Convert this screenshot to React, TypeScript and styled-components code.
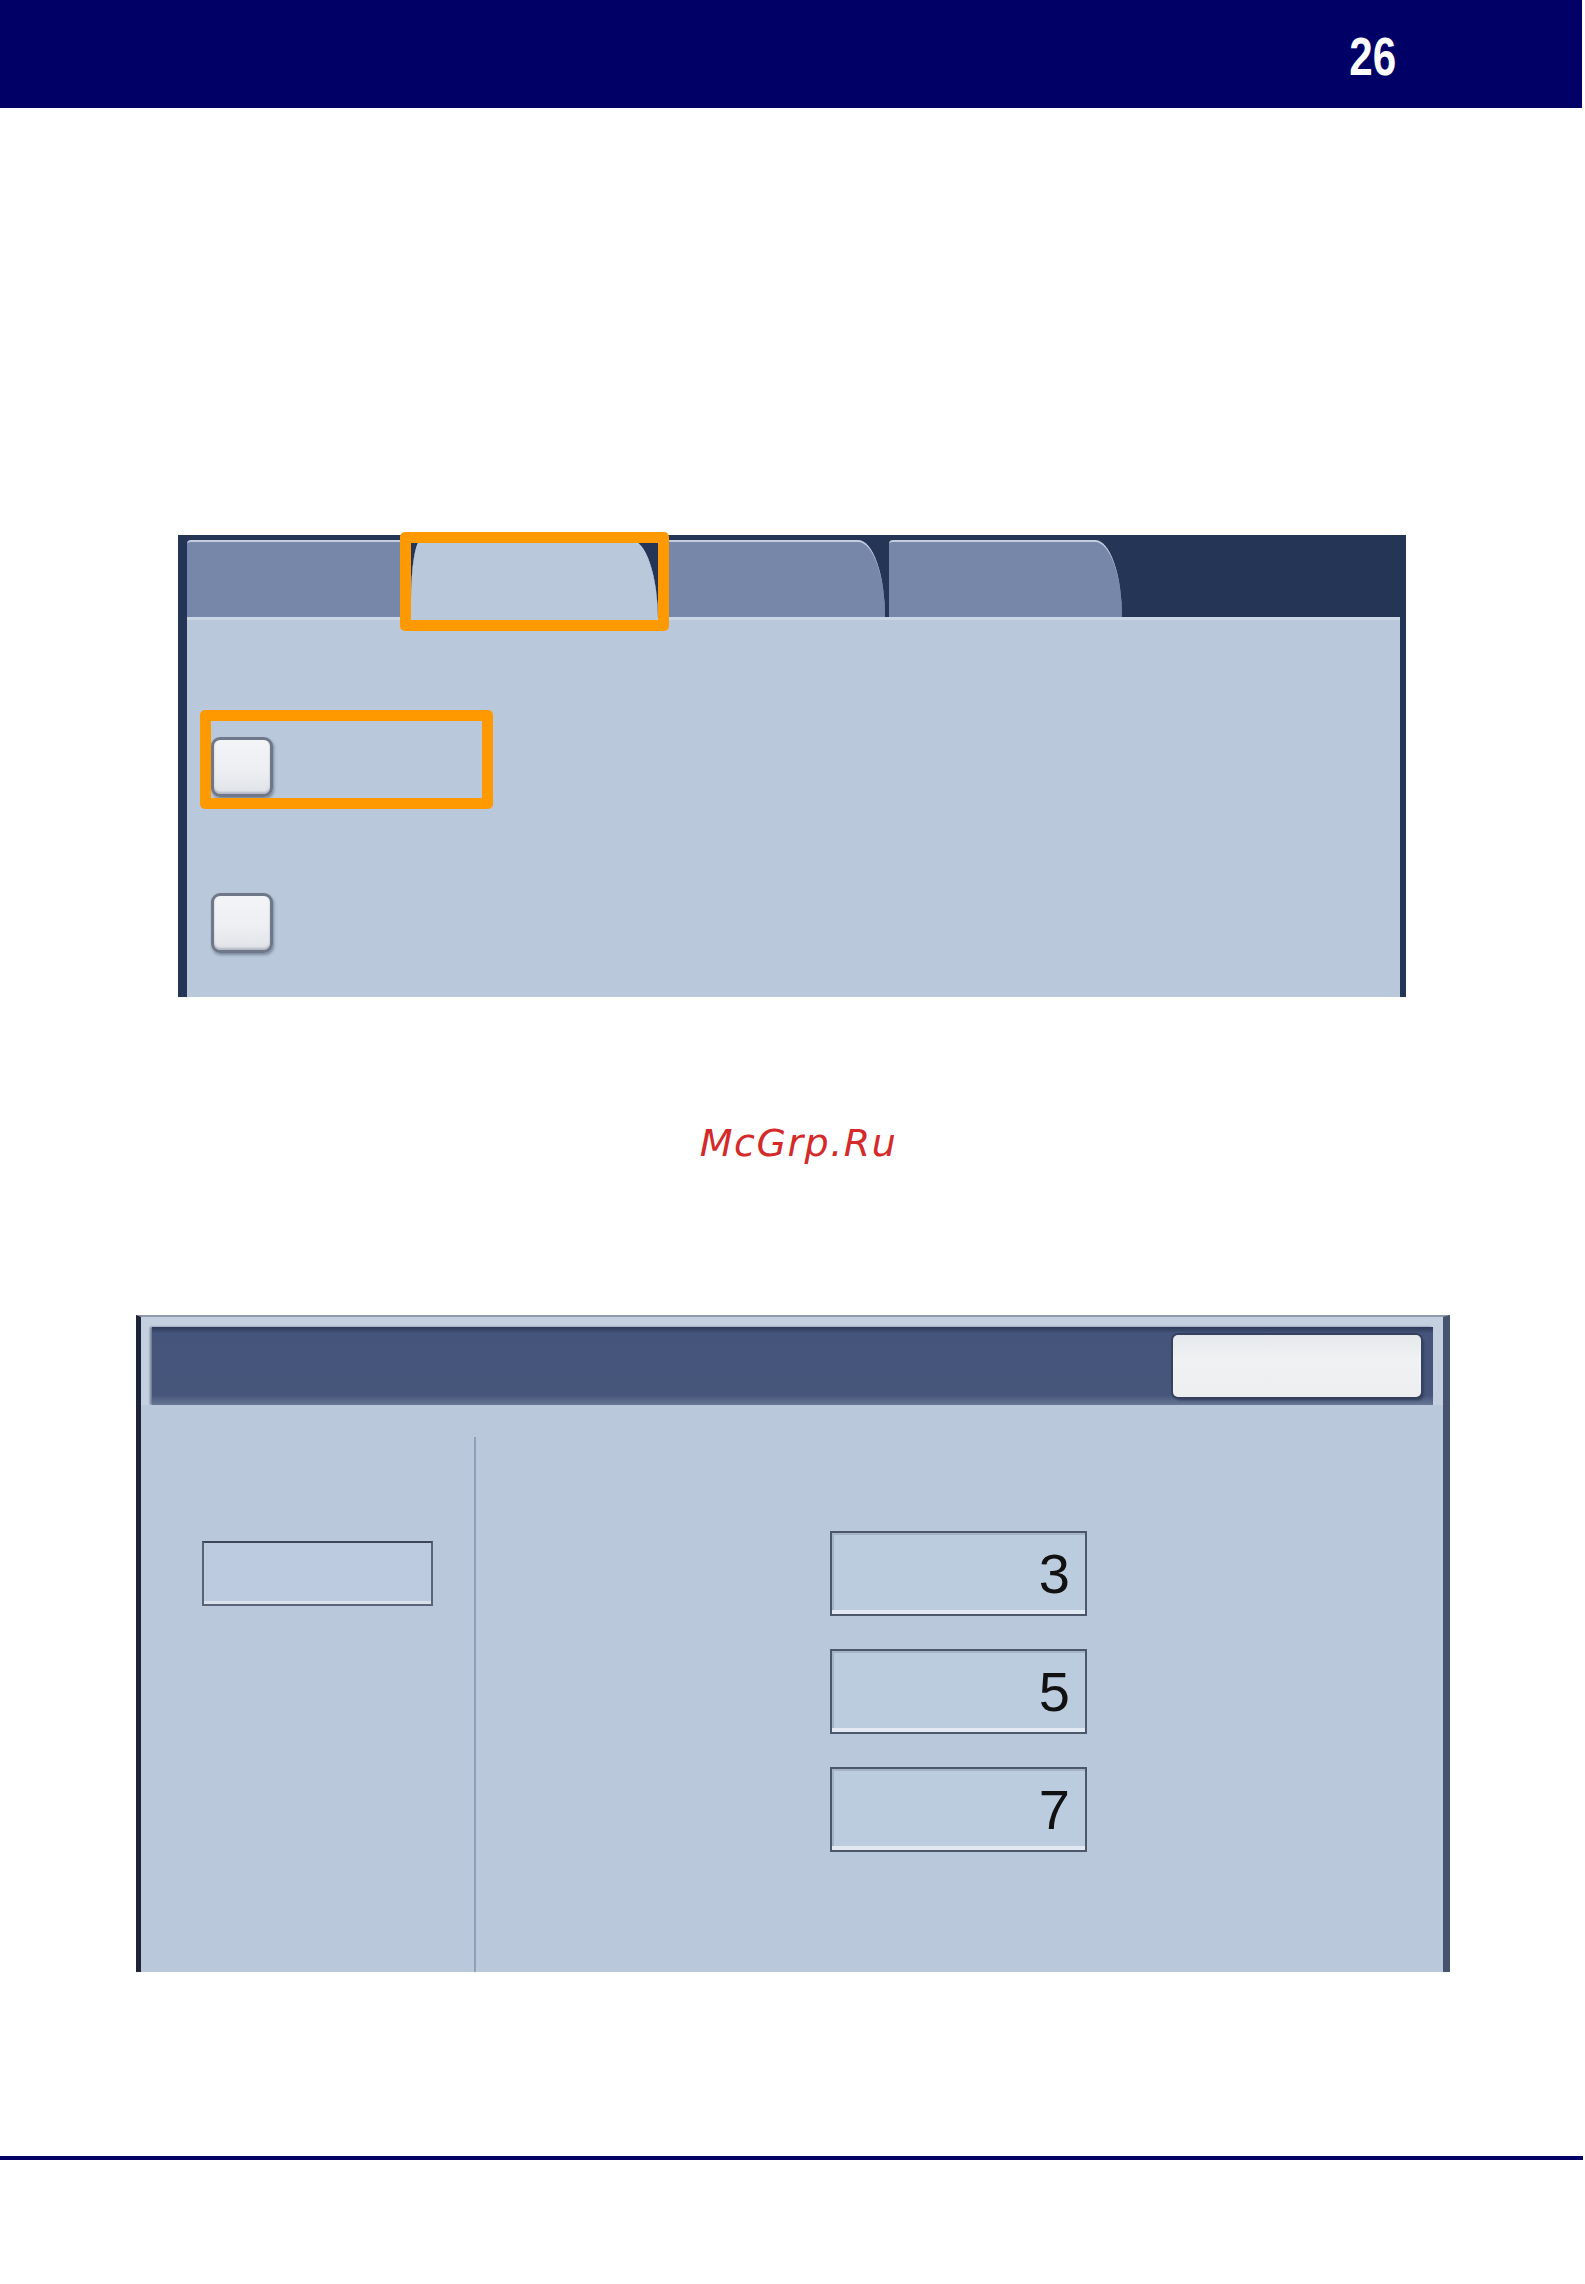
import React from "react";
import styled, { createGlobalStyle } from "styled-components";

const GlobalStyle = createGlobalStyle`
  html, body {
    margin: 0;
    padding: 0;
    background: #ffffff;
  }
  body {
    font-family: "Liberation Sans", Arial, sans-serif;
  }
`;

const Page = styled.div`
  width: 1585px;
  min-height: 2284px;
  background: #ffffff;
  display: flex;
  flex-direction: column;
`;

const TopBar = styled.header`
  width: 1582px;
  height: 108px;
  box-sizing: border-box;
  background: #000066;
  display: flex;
  justify-content: flex-end;
  align-items: flex-start;
  padding: 29px 186px 0 0;
`;

const PageNumber = styled.span`
  display: inline-block;
  font-family: "Liberation Sans", Arial, sans-serif;
  font-weight: 700;
  font-size: 54px;
  line-height: 1;
  color: #ffffff;
  transform: scaleX(0.78);
  transform-origin: right center;
`;

/* ---------- first screen: tabs with options ---------- */

const TabScreen = styled.section`
  position: relative;
  margin: 427px 0 0 178px;
  width: 1228px;
  height: 462px;
  box-sizing: border-box;
  background: #253555;
  padding: 5px 6px 0 9px;
  display: flex;
  flex-direction: column;
`;

const TabBar = styled.div`
  height: 77px;
  display: flex;
  align-items: flex-start;
`;

const Tab = styled.div<{ $w: number; $active?: boolean; $gap: number; $curve: number }>`
  flex: none;
  width: ${(p) => p.$w}px;
  margin-right: ${(p) => p.$gap}px;
  box-sizing: border-box;
  height: ${(p) => (p.$active ? 80 : 77)}px;
  position: relative;
  z-index: ${(p) => (p.$active ? 1 : 0)};
  background: ${(p) => (p.$active ? "#b9c9db" : "#7687a9")};
  border-top: 2px solid ${(p) => (p.$active ? "#c6d3e3" : "#c2cde0")};
  border-top-left-radius: ${(p) => (p.$active ? "10px 60px" : "4px")};
  border-top-right-radius: ${(p) => p.$curve}px 100%;
`;

const TabContent = styled.div`
  flex: 1;
  background: #b9c9db;
  border-top: 3px solid #cbd6e5;
  padding: 117px 0 0 24px;
  display: flex;
  flex-direction: column;
  gap: 96px;
`;

const Checkbox = styled.div`
  width: 62px;
  height: 60px;
  box-sizing: border-box;
  border-radius: 9px;
  border: 3px solid #6f7889;
  background: linear-gradient(180deg, #f3f4f6 0%, #eceef2 60%, #dfe2e8 100%);
  box-shadow: 1px 2px 3px rgba(30, 40, 60, 0.4), inset 0 -2px 2px rgba(110, 120, 140, 0.4);
`;

const Highlight = styled.div<{ $x: number; $y: number; $w: number; $h: number }>`
  position: absolute;
  left: ${(p) => p.$x}px;
  top: ${(p) => p.$y}px;
  width: ${(p) => p.$w}px;
  height: ${(p) => p.$h}px;
  box-sizing: border-box;
  border: 11px solid #ff9900;
  border-radius: 5px;
  z-index: 2;
`;

/* ---------- watermark ---------- */

const Watermark = styled.div`
  margin-top: 124px;
  height: 44px;
  line-height: 44px;
  text-align: center;
  padding-left: 12px;
  font-family: "DejaVu Sans", Verdana, sans-serif;
  font-style: italic;
  font-size: 38px;
  letter-spacing: 1.5px;
  color: #d42a2a;
`;

/* ---------- second screen: values ---------- */

const ValueScreen = styled.section`
  margin: 150px 0 0 136px;
  width: 1314px;
  height: 657px;
  box-sizing: border-box;
  background: #c4d0df;
  border-left: 5px solid #1d2435;
  border-right: 7px solid #46536d;
  border-top: 2px solid #8e99ab;
  padding: 10px 10px 0 11px;
  display: flex;
  flex-direction: column;
`;

const TitleBar = styled.div`
  height: 78px;
  box-sizing: border-box;
  background: linear-gradient(180deg, #2c3857 0%, #44547a 8%, #46567b 88%, #6a7896 100%);
  box-shadow: -2px 0 2px rgba(30, 40, 60, 0.5);
  display: flex;
  justify-content: flex-end;
  align-items: center;
  padding-right: 12px;
`;

const TitleButton = styled.div`
  width: 248px;
  height: 62px;
  box-sizing: border-box;
  border-radius: 5px;
  background: linear-gradient(180deg, #e6e9ec 0%, #eff1f2 40%, #eceef0 100%);
  box-shadow: 0 0 0 2px #34425f, 2px 3px 3px rgba(10, 20, 40, 0.5);
`;

const ValueBody = styled.div`
  flex: 1;
  display: flex;
  background: #b9c9db;
  margin: 0 -10px 0 -11px;
  padding-left: 11px;
`;

const SideColumn = styled.div`
  width: 322px;
  flex: none;
  padding: 136px 0 0 50px;
  box-sizing: border-box;
`;

const SideField = styled.div`
  width: 231px;
  height: 65px;
  box-sizing: border-box;
  background: #bccbe0;
  border: 2px solid #5a6478;
  border-top-color: #3d475c;
  box-shadow: inset 0 -3px 0 #d8e1ec;
`;

const Divider = styled.div`
  width: 2px;
  flex: none;
  margin-top: 32px;
  background: #8fa0b8;
`;

const MainColumn = styled.div`
  flex: 1;
  padding: 126px 0 0 354px;
  display: flex;
  flex-direction: column;
  gap: 33px;
`;

const NumberField = styled.div`
  width: 257px;
  height: 85px;
  box-sizing: border-box;
  border: 2px solid #4d576c;
  background: #bcccdf;
  box-shadow: inset 0 -4px 0 #e2e9f2, inset 2px 2px 0 #a6b4c8;
  display: flex;
  align-items: center;
  justify-content: flex-end;
  padding-right: 15px;
  font-family: "Liberation Sans", Arial, sans-serif;
  font-size: 56px;
  line-height: 1;
  color: #111111;
`;

const BottomRule = styled.div`
  margin-top: 184px;
  width: 1583px;
  height: 4px;
  background: #000066;
`;

const tabs = [
  { w: 224, gap: 0, curve: 10 },
  { w: 247, gap: 4, curve: 27, active: true },
  { w: 223, gap: 4, curve: 27 },
  { w: 233, gap: 0, curve: 27 },
];

export default function App() {
  return (
    <Page>
      <GlobalStyle />
      <TopBar>
        <PageNumber>26</PageNumber>
      </TopBar>

      <TabScreen>
        <TabBar>
          {tabs.map((t, i) => (
            <Tab key={i} $w={t.w} $gap={t.gap} $curve={t.curve} $active={t.active} />
          ))}
        </TabBar>
        <TabContent>
          <Checkbox />
          <Checkbox />
        </TabContent>
        <Highlight $x={222} $y={-3} $w={269} $h={99} />
        <Highlight $x={22} $y={175} $w={293} $h={99} />
      </TabScreen>

      <Watermark>McGrp.Ru</Watermark>

      <ValueScreen>
        <TitleBar>
          <TitleButton />
        </TitleBar>
        <ValueBody>
          <SideColumn>
            <SideField />
          </SideColumn>
          <Divider />
          <MainColumn>
            <NumberField>3</NumberField>
            <NumberField>5</NumberField>
            <NumberField>7</NumberField>
          </MainColumn>
        </ValueBody>
      </ValueScreen>

      <BottomRule />
    </Page>
  );
}
